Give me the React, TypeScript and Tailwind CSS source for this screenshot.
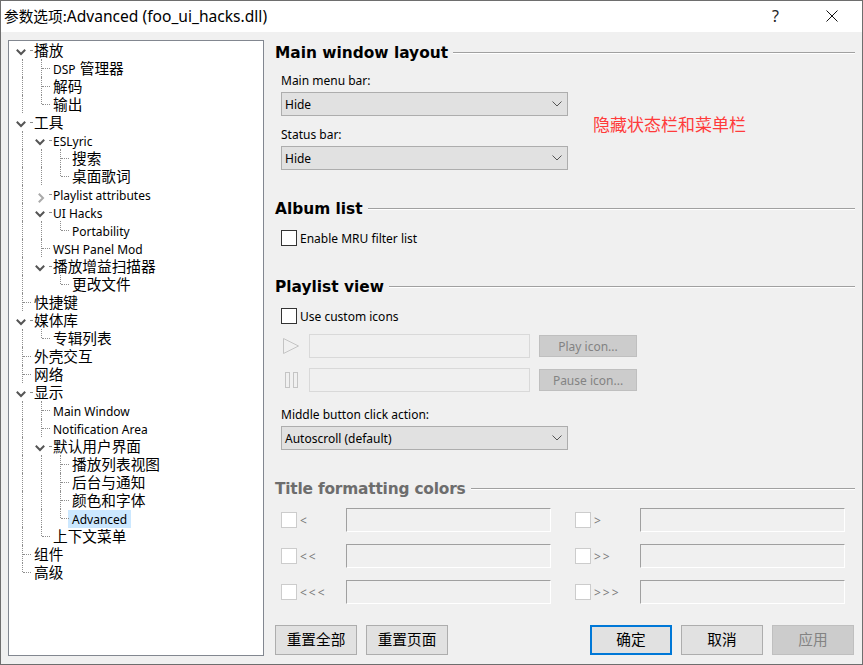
const LATIN = "text-[12px] [font-family:'Noto_Sans','Noto_Sans_CJK_SC',sans-serif]";
const CJK = "text-[14.67px] [font-family:'Noto_Sans_CJK_SC',sans-serif]";

type Guide = "none" | "pipe" | "tee" | "ell" | "open" | "closed";

interface TreeRow {
  label: string;
  guides: Guide[];
  selected?: boolean;
}

// one guide cell per depth, same idea as the classic win32 tree
const ROWS: TreeRow[] = [
  { label: "播放", guides: ["open"] },
  { label: "DSP 管理器", guides: ["pipe", "tee"] },
  { label: "解码", guides: ["pipe", "tee"] },
  { label: "输出", guides: ["pipe", "ell"] },
  { label: "工具", guides: ["open"] },
  { label: "ESLyric", guides: ["pipe", "open"] },
  { label: "搜索", guides: ["pipe", "pipe", "tee"] },
  { label: "桌面歌词", guides: ["pipe", "pipe", "ell"] },
  { label: "Playlist attributes", guides: ["pipe", "closed"] },
  { label: "UI Hacks", guides: ["pipe", "open"] },
  { label: "Portability", guides: ["pipe", "pipe", "ell"] },
  { label: "WSH Panel Mod", guides: ["pipe", "tee"] },
  { label: "播放增益扫描器", guides: ["pipe", "open"] },
  { label: "更改文件", guides: ["pipe", "none", "ell"] },
  { label: "快捷键", guides: ["tee"] },
  { label: "媒体库", guides: ["open"] },
  { label: "专辑列表", guides: ["pipe", "ell"] },
  { label: "外壳交互", guides: ["tee"] },
  { label: "网络", guides: ["tee"] },
  { label: "显示", guides: ["open"] },
  { label: "Main Window", guides: ["pipe", "tee"] },
  { label: "Notification Area", guides: ["pipe", "tee"] },
  { label: "默认用户界面", guides: ["pipe", "open"] },
  { label: "播放列表视图", guides: ["pipe", "pipe", "tee"] },
  { label: "后台与通知", guides: ["pipe", "pipe", "tee"] },
  { label: "颜色和字体", guides: ["pipe", "pipe", "tee"] },
  { label: "Advanced", guides: ["pipe", "pipe", "ell"], selected: true },
  { label: "上下文菜单", guides: ["pipe", "ell"] },
  { label: "组件", guides: ["tee"] },
  { label: "高级", guides: ["ell"] },
];

function GuideCell({ kind }: { kind: Guide }) {
  return (
    <div className="relative h-[18px] w-[19px] shrink-0">
      {(kind === "pipe" || kind === "tee") && (
        <div className="absolute left-[9px] top-0 h-[18px] border-l border-dotted border-[#8f8f8f]" />
      )}
      {kind === "ell" && <div className="absolute left-[9px] top-0 h-[9px] border-l border-dotted border-[#8f8f8f]" />}
      {(kind === "tee" || kind === "ell") && (
        <div className="absolute left-[10px] top-[9px] w-[8px] border-t border-dotted border-[#8f8f8f]" />
      )}
      {kind === "open" && (
        <>
          <svg className="absolute left-[3px] top-[8px]" width="10" height="7" viewBox="0 0 10 7" fill="none">
            <path d="M0.8 0.8 L5 5 L9.2 0.8" stroke="#555555" strokeWidth="2" />
          </svg>
          <div className="absolute left-[17px] top-[9px] w-[2px] border-t border-dotted border-[#8f8f8f]" />
        </>
      )}
      {kind === "closed" && (
        <>
          <svg className="absolute left-[6px] top-[8px]" width="7" height="10" viewBox="0 0 7 10" fill="none">
            <path d="M0.8 0.8 L5 5 L0.8 9.2" stroke="#aaaaaa" strokeWidth="2" />
          </svg>
          <div className="absolute left-[17px] top-[9px] w-[2px] border-t border-dotted border-[#8f8f8f]" />
        </>
      )}
    </div>
  );
}

function RowLabel({ label, selected }: { label: string; selected?: boolean }) {
  const isMixed = label.startsWith("DSP");
  const isCjk = /[^\x00-\x7f]/.test(label) && !isMixed;
  return (
    <span
      className={`h-[18px] leading-[18px] whitespace-nowrap text-black ${isCjk ? CJK : LATIN} ${
        !isCjk && !isMixed && !selected ? "pt-[2px]" : ""
      } ${selected ? "mt-[1px] -ml-[4px] bg-[#cce8ff] px-[4px] pt-[1px]" : ""}`}
    >
      {isMixed ? (
        <>
          DSP <span className={`ml-[1px] ${CJK}`}>管理器</span>
        </>
      ) : (
        label
      )}
    </span>
  );
}

function Tree() {
  return (
    <div className="h-[616px] w-[256px] shrink-0 border border-[#828790] bg-white pl-[4px]">
      {ROWS.map((row) => (
        <div key={row.label} className="flex h-[18px] items-center">
          {row.guides.map((g, i) => (
            <GuideCell key={i} kind={g} />
          ))}
          <div className="ml-[2px] flex">
            <RowLabel label={row.label} selected={row.selected} />
          </div>
        </div>
      ))}
    </div>
  );
}

function Heading({ title, muted, className }: { title: string; muted?: boolean; className?: string }) {
  return (
    <div className={`flex h-[24px] items-center ${className ?? ""}`}>
      <span
        className={`pt-[4px] text-[15.4px] font-bold whitespace-nowrap [font-family:'DejaVu_Sans',sans-serif] ${
          muted ? "tracking-[-0.2px] text-[#6d6d6d]" : "text-black"
        }`}
      >
        {title}
      </span>
      <div className="mt-[2px] ml-[5px] h-[2px] flex-1 border-t border-b border-t-[#a0a0a0] border-b-white" />
    </div>
  );
}

function Label({ text, className }: { text: string; className?: string }) {
  return <div className={`h-[16px] leading-[18px] text-black ${LATIN} ${className ?? ""}`}>{text}</div>;
}

function Select({ value }: { value: string }) {
  return (
    <div className="mt-[4px] flex h-[24px] w-[287px] items-center justify-between border border-[#adadad] bg-[#e1e1e1] pr-[5px] pl-[3px]">
      <span className={`pt-[2px] text-black ${LATIN}`}>{value}</span>
      <svg width="10" height="6" viewBox="0 0 10 6" fill="none">
        <path d="M0.5 0.5 L5 5 L9.5 0.5" stroke="#555" strokeWidth="1" />
      </svg>
    </div>
  );
}

function Check({ label, disabled, className }: { label: string; disabled?: boolean; className?: string }) {
  return (
    <div className={`flex h-[16px] items-center ${className ?? ""}`}>
      <span className={`h-[16px] w-[16px] shrink-0 border bg-white ${disabled ? "border-[#cccccc]" : "border-[#333333]"}`} />
      <span
        className={`ml-[3px] whitespace-nowrap ${
          disabled ? "pt-[1px] tracking-[2px] text-[#7a7a7a]" : "pt-[2px] text-black"
        } ${LATIN}`}
      >
        {label}
      </span>
    </div>
  );
}

function IconRow({ icon, button, className }: { icon: React.ReactNode; button: string; className?: string }) {
  return (
    <div className={`flex h-[24px] items-center ${className ?? ""}`}>
      <div className="flex w-[28px] shrink-0">
        <div className="flex w-[20px] justify-center">{icon}</div>
      </div>
      <div className="h-[24px] w-[221px] border border-[#d9d9d9] bg-[#f0f0f0]" />
      <button
        className={`ml-[9px] h-[22px] w-[98px] border border-[#bfbfbf] bg-[#cccccc] pt-[2px] text-[#838383] ${LATIN}`}
      >
        {button}
      </button>
    </div>
  );
}

function ColorField({ label }: { label: string }) {
  return (
    <div className="flex h-[24px] w-[294px] shrink-0 items-center">
      <Check label={label} disabled className="w-[65px]" />
      <div className="h-[24px] w-[205px] border-t border-r border-b border-l border-t-[#a0a0a0] border-r-white border-b-white border-l-[#a0a0a0]" />
    </div>
  );
}

function FooterButton({
  text,
  primary,
  disabled,
  className,
}: {
  text: string;
  primary?: boolean;
  disabled?: boolean;
  className?: string;
}) {
  let look = "border border-[#adadad] bg-[#e1e1e1] text-black";
  if (primary) look = "border-2 border-[#0078d7] bg-[#e1e1e1] text-black";
  if (disabled) look = "border border-[#bfbfbf] bg-[#cccccc] text-[#838383]";
  return <button className={`h-[30px] w-[82px] pb-[2px] ${CJK} ${look} ${className ?? ""}`}>{text}</button>;
}

export default function App() {
  return (
    <div className="flex h-[665px] w-[863px] flex-col border border-[#6e6e6e] bg-[#f0f0f0]">
      {/* Title bar */}
      <div className="flex h-[31px] shrink-0 items-center bg-white pb-[1px] pl-[3px]">
        <span className={`mt-[2px] whitespace-nowrap text-black ${CJK}`}>
          参数选项:
          <span className="text-[15.6px] [font-family:'Noto_Sans',sans-serif]">Advanced (foo_ui_hacks.dll)</span>
        </span>
        <span className="ml-auto text-[16px] leading-none text-[#222] [font-family:'Noto_Sans',sans-serif]">?</span>
        <svg className="mr-[24px] ml-[47px]" width="12" height="12" viewBox="0 0 12 12" fill="none">
          <path d="M0.5 0.5 L11.5 11.5 M11.5 0.5 L0.5 11.5" stroke="#111" strokeWidth="1" />
        </svg>
      </div>

      <div className="flex pt-[8px] pl-[7px]">
        <Tree />

        <div className="ml-[11px] w-[580px]">
          <Heading title="Main window layout" />
          <div className="pl-[6px]">
            <div className="flex">
              <div>
                <Label text="Main menu bar:" className="mt-[8px]" />
                <Select value="Hide" />
                <Label text="Status bar:" className="mt-[10px]" />
                <Select value="Hide" />
              </div>
              <div className="mt-[14px] ml-[25px] flex items-center text-[17px] whitespace-nowrap text-[#ff3b3b] [font-family:'Noto_Sans_CJK_SC',sans-serif]">
                隐藏状态栏和菜单栏
              </div>
            </div>
          </div>

          <Heading title="Album list" className="mt-[26px]" />
          <div className="pl-[6px]">
            <Check label="Enable MRU filter list" className="mt-[10px]" />
          </div>

          <Heading title="Playlist view" className="mt-[28px]" />
          <div className="pl-[6px]">
            <Check label="Use custom icons" className="mt-[10px]" />
            <IconRow
              className="mt-[10px]"
              button="Play icon..."
              icon={
                <svg width="16" height="16" viewBox="0 0 16 16" fill="none">
                  <path d="M0.5 0.5 L15.5 8 L0.5 15.5 Z" stroke="#c4c4c4" strokeWidth="1" />
                </svg>
              }
            />
            <IconRow
              className="mt-[10px]"
              button="Pause icon..."
              icon={
                <svg width="13" height="16" viewBox="0 0 13 16" fill="none">
                  <rect x="0.5" y="0.5" width="4" height="15" stroke="#c4c4c4" />
                  <rect x="8.5" y="0.5" width="4" height="15" stroke="#c4c4c4" />
                </svg>
              }
            />
            <Label text="Middle button click action:" className="mt-[14px]" />
            <Select value="Autoscroll (default)" />
          </div>

          <Heading title="Title formatting colors" muted className="mt-[26px]" />
          <div className="pl-[6px]">
            <div className="mt-[8px] flex">
              <ColorField label="<" />
              <ColorField label=">" />
            </div>
            <div className="mt-[12px] flex">
              <ColorField label="<<" />
              <ColorField label=">>" />
            </div>
            <div className="mt-[12px] flex">
              <ColorField label="<<<" />
              <ColorField label=">>>" />
            </div>
          </div>

          <div className="mt-[21px] flex">
            <FooterButton text="重置全部" />
            <FooterButton text="重置页面" className="ml-[9px]" />
            <FooterButton text="确定" primary className="ml-[142px]" />
            <FooterButton text="取消" className="ml-[9px]" />
            <FooterButton text="应用" disabled className="ml-[9px]" />
          </div>
        </div>
      </div>
    </div>
  );
}
